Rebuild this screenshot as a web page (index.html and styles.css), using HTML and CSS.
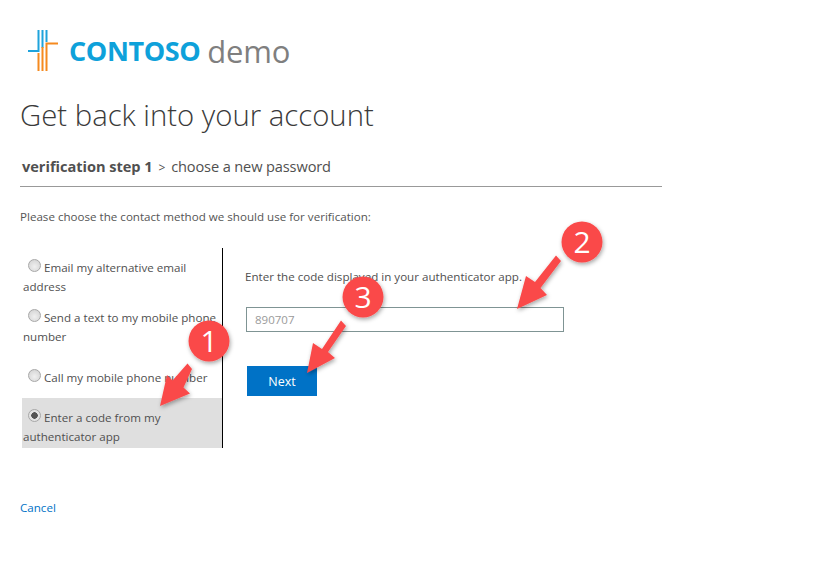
FILE: index.html
```html
<!DOCTYPE html>
<html lang="en">
<head>
<meta charset="utf-8">
<title>Get back into your account</title>
<link rel="stylesheet" href="styles.css">
</head>
<body>
<div class="page">
  <header class="logo">
    <svg class="logo-mark" width="30" height="41" viewBox="0 0 30 41" aria-hidden="true">
      <path d="M10.500 0V21H0M14.500 0V18M18.500 0V12" fill="none" stroke="#1fa3dc" stroke-width="2"/>
      <path d="M30 13.500H18.500V41M14.500 17V41M10.500 23V41" fill="none" stroke="#f58a1f" stroke-width="2"/>
    </svg>
    <span class="logo-brand">CONTOSO</span>
    <span class="logo-demo">demo</span>
  </header>
  <h1 class="title">Get back into your account</h1>
  <div class="steps"><b>verification step 1</b> <span class="sep">&gt;</span> <span class="step-next">choose a new password</span></div>
  <p class="intro">Please choose the contact method we should use for verification:</p>
  <div class="panel">
    <div class="options">
      <label class="option"><input type="radio" name="m"><span>Email my alternative email address</span></label>
      <label class="option"><input type="radio" name="m"><span>Send a text to my mobile phone number</span></label>
      <label class="option option-single"><input type="radio" name="m"><span>Call my mobile phone number</span></label>
      <label class="option option-selected"><input type="radio" name="m" checked><span>Enter a code from my authenticator app</span></label>
    </div>
    <div class="detail">
      <p class="detail-text">Enter the code displayed in your authenticator app.</p>
      <input class="code" type="text" value="890707">
      <button class="next" type="button">Next</button>
    </div>
  </div>
  <a class="cancel" href="#">Cancel</a>
  <svg class="notes" width="830" height="580" viewBox="0 0 830 580" aria-hidden="true">
    <defs>
      <filter id="sh" x="-30%" y="-30%" width="160%" height="160%">
        <feDropShadow dx="1" dy="2" stdDeviation="2" flood-color="#000" flood-opacity=".35"/>
      </filter>
    </defs>
    <g filter="url(#sh)">
      <path class="arrow" d="M192 369L187.500 363.500L172.500 380.500L167 375L160 406L190 393.500L183.500 387.500Z"/>
      <circle class="dot" cx="209" cy="341" r="20.500"/>
    </g>
    <text class="num" x="209" y="352">1</text>
    <g filter="url(#sh)">
      <path class="arrow" d="M561 261L556 255.500L535 282L526 276L517 309L547 295L540.500 288Z"/>
      <circle class="dot" cx="582" cy="242" r="20.500"/>
    </g>
    <text class="num" x="582" y="253">2</text>
    <g filter="url(#sh)">
      <path class="arrow" d="M346 326L341 320.500L322 349L313 343L307 373L335 358L328 352Z"/>
      <circle class="dot" cx="363" cy="297" r="20.500"/>
    </g>
    <text class="num" x="363" y="308">3</text>
  </svg>
</div>
</body>
</html>
```
FILE: styles.css
```css
* { box-sizing: border-box; }
html, body { margin: 0; background: #fff; }
body { font-family: "Open Sans", "Noto Sans", sans-serif; color: #505050; }
.page { position: relative; width: 830px; height: 580px; overflow: hidden; padding: 30px 0 0 20px; }
.logo { display: flex; align-items: center; height: 41px; margin-left: 8px; }
.logo-mark { flex: none; margin-right: 11px; }
.logo-brand { font-size: 27px; font-weight: 700; color: #0ea1da; letter-spacing: -.4px; margin-right: 7px; }
.logo-demo { font-size: 31px; color: #7f7f7f; letter-spacing: -.2px; }
.title { margin: 22px 0 0; height: 44px; font-size: 29.300px; line-height: 44px; font-weight: 300; color: #3a3a3a; white-space: nowrap; }
.steps { width: 642px; height: 31px; margin-top: 19px; padding: 0 0 0 2px; border-bottom: 1px solid #999; font-size: 14.600px; line-height: 20px; color: #505050; }
.steps b { font-weight: 700; letter-spacing: -.03px; }
.sep { font-size: 12px; margin: 0 2px 0 2px; }
.step-next { letter-spacing: -.13px; }
.intro { margin: 20px 0 0; font-size: 11.600px; line-height: 20px; color: #555; }
.panel { display: flex; margin: 21px 0 0 2px; height: 200px; }
.options { width: 201px; flex: none; border-right: 1px solid #000; }
.option { display: block; height: 50px; padding: 10px 0 0 1px; font-size: 11.600px; line-height: 19px; color: #505050; }
.option input { appearance: none; width: 13px; height: 13px; margin: 0 3px 0 5px; vertical-align: 0; border: 1px solid #a8a8a8; border-radius: 50%; background: radial-gradient(circle at 50% 60%, #f0f0f0, #cfcfcf); }
.option input:checked { background: radial-gradient(circle, #555 0 3px, #e4e4e4 3.500px); }
.option-single { padding-top: 20px; }
.option-selected { background: #dfdfdf; }
.detail { padding: 19px 0 0 22px; display: flex; flex-direction: column; align-items: flex-start; }
.detail-text { margin: 0; font-size: 11.600px; line-height: 20px; color: #505050; }
.code { width: 318px; height: 25px; margin: 20px 0 0 1px; padding: 0 8px; border: 1px solid #7f9494; border-radius: 0; outline: none; font: 11.500px "Open Sans", sans-serif; color: #9a9a9a; }
.next { width: 70px; height: 30px; margin: 34px 0 0 2px; padding: 0; border: 0; background: #0072c6; color: #fff; font: 400 12.500px "Open Sans", sans-serif; }
.cancel { display: block; margin-top: 50px; font-size: 11.600px; line-height: 20px; color: #0072c6; text-decoration: none; }
.notes { position: absolute; left: 0; top: 0; pointer-events: none; }
.arrow { fill: #fa4a4a; }
.dot { fill: #fa4a4a; }
.num { fill: #fff; font: 400 30px "Open Sans", sans-serif; text-anchor: middle; }
```
